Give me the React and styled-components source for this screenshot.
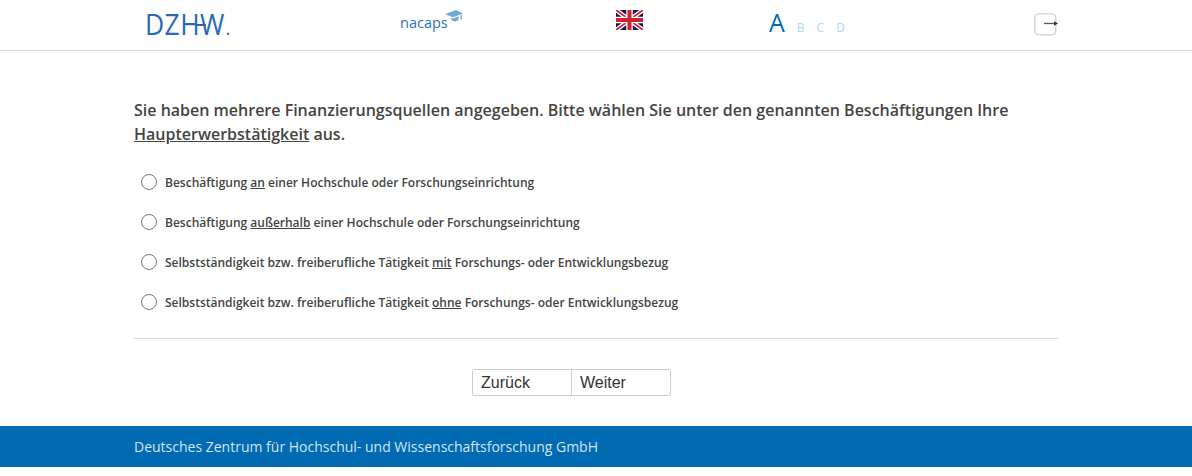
import React from 'react';
import styled, { createGlobalStyle } from 'styled-components';

const GlobalStyle = createGlobalStyle`
  html, body {
    margin: 0;
    padding: 0;
    background: #fff;
    font-family: "Open Sans", sans-serif;
    color: #444;
  }
`;

const options = [
  ['Beschäftigung ', 'an', ' einer Hochschule oder Forschungseinrichtung'],
  ['Beschäftigung ', 'außerhalb', ' einer Hochschule oder Forschungseinrichtung'],
  ['Selbstständigkeit bzw. freiberufliche Tätigkeit ', 'mit', ' Forschungs- oder Entwicklungsbezug'],
  ['Selbstständigkeit bzw. freiberufliche Tätigkeit ', 'ohne', ' Forschungs- oder Entwicklungsbezug'],
];

const FlagIcon = () => (
  <svg width="27" height="20" viewBox="0 0 27 20">
    <rect width="27" height="20" fill="#14145f" />
    <path d="M0 0L27 20M27 0L0 20" stroke="#fff" strokeWidth="4.5" />
    <path d="M0 0L27 20M27 0L0 20" stroke="#d3202c" strokeWidth="1.8" />
    <path d="M13.5 0V20M0 10H27" stroke="#fff" strokeWidth="6.5" />
    <path d="M13.5 0V20M0 10H27" stroke="#d3202c" strokeWidth="4" />
  </svg>
);

const CapIcon = () => (
  <svg width="18" height="12" viewBox="0 0 18 12">
    <path d="M0 4.2L11 0L18 3.4L8 7.2Z" fill="#6fa8d6" />
    <path d="M6 7.6L8.2 8.4L13.5 6.3V10.2L10 11.6L6.5 10.2Z" fill="#6fa8d6" />
    <rect x="15.6" y="4.5" width="1.3" height="5" fill="#6fa8d6" />
  </svg>
);

const LogoutIcon = () => (
  <svg width="24" height="26" viewBox="0 0 24 26">
    <rect x="0.8" y="3.8" width="21" height="21" rx="4" fill="#fff" stroke="#d9d9d9" strokeWidth="1.6" />
    <path d="M10 13.5H21" stroke="#555" strokeWidth="1.3" />
    <path d="M20 11.3L24 13.5L20 15.7Z" fill="#333" />
  </svg>
);

const App = () => (
  <>
    <GlobalStyle />
    <Header>
      <HeaderInner>
        <DzhwLogo>DZH<LogoW>W</LogoW><Dot>.</Dot></DzhwLogo>
        <NacapsLogo>nacaps<CapIcon /></NacapsLogo>
        <FlagSlot><FlagIcon /></FlagSlot>
        <Sizes>
          <SizeLetter $active>A</SizeLetter>
          <SizeLetter>B</SizeLetter>
          <SizeLetter>C</SizeLetter>
          <SizeLetter>D</SizeLetter>
        </Sizes>
        <LogoutSlot><LogoutIcon /></LogoutSlot>
      </HeaderInner>
    </Header>
    <Main>
      <Question>
        Sie haben mehrere Finanzierungsquellen angegeben. Bitte wählen Sie unter den genannten Beschäftigungen Ihre <u>Haupterwerbstätigkeit</u> aus.
      </Question>
      <OptionList>
        {options.map(([before, mark, after]) => (
          <Option key={before + mark}>
            <Radio />
            <span>{before}<u>{mark}</u>{after}</span>
          </Option>
        ))}
      </OptionList>
      <Divider />
      <ButtonGroup>
        <NavButton>Zurück</NavButton>
        <NavButton>Weiter</NavButton>
      </ButtonGroup>
    </Main>
    <Footer>
      <FooterText>Deutsches Zentrum für Hochschul- und Wissenschaftsforschung GmbH</FooterText>
    </Footer>
  </>
);

const Header = styled.header`
  height: 50px;
  border-bottom: 1px solid #ddd;
`;

const HeaderInner = styled.div`
  width: 913px;
  margin-left: 145px;
  height: 100%;
  display: grid;
  grid-template-columns: 255px 216px 153px 265px 24px;
  align-items: start;
`;

const DzhwLogo = styled.div`
  font-family: "Open Sans", sans-serif;
  font-size: 29px;
  font-weight: 400;
  line-height: 30px;
  margin-top: 9px;
  letter-spacing: 0.5px;
  color: #2a69b5;
  transform: scaleX(0.91);
  transform-origin: left center;
`;

const LogoW = styled.span`
  position: relative;
  letter-spacing: 0;

  &::before {
    content: '';
    position: absolute;
    left: -5px;
    top: 20px;
    width: 11px;
    height: 2px;
    background: #2a69b5;
  }
`;

const Dot = styled.span`
  margin-left: 2px;
  font-size: 14px;
  font-weight: 700;
`;

const NacapsLogo = styled.div`
  display: flex;
  align-items: flex-start;
  font-size: 14.5px;
  line-height: 20px;
  margin-top: 13px;
  color: #2a75b8;

  svg {
    margin-top: -3px;
    margin-left: -3px;
  }
`;

const FlagSlot = styled.div`
  margin-top: 10px;
  line-height: 0;
`;

const Sizes = styled.div`
  display: flex;
  align-items: baseline;
  gap: 12px;
  margin-top: 7px;
  line-height: 30px;
`;

const SizeLetter = styled.span`
  font-size: ${(p) => (p.$active ? '25px' : '12px')};
  color: ${(p) => (p.$active ? '#0069b4' : '#b5d5ee')};
`;

const LogoutSlot = styled.div`
  margin-top: 10px;
  line-height: 0;
`;

const Main = styled.main`
  width: 924px;
  margin: 0 auto;
  padding-top: 47px;
`;

const Question = styled.h1`
  margin: 0;
  font-size: 16px;
  line-height: 24px;
  font-weight: 600;
  color: #444;
`;

const OptionList = styled.div`
  display: flex;
  flex-direction: column;
  margin-top: 16px;
`;

const Option = styled.label`
  display: flex;
  align-items: center;
  height: 40px;
  padding-left: 7px;
  font-size: 12px;
  font-weight: 600;
  color: #444;
`;

const Radio = styled.span`
  box-sizing: border-box;
  width: 16px;
  height: 16px;
  margin-right: 8px;
  border: 1px solid #777;
  border-radius: 50%;
  background: #fff;
`;

const Divider = styled.hr`
  margin: 16px 0 0;
  border: 0;
  border-top: 1px solid #ddd;
`;

const ButtonGroup = styled.div`
  display: flex;
  width: 199px;
  margin: 30px 0 0 338px;
  border: 1px solid #ccc;
  border-radius: 2px;
  box-sizing: border-box;
`;

const NavButton = styled.button`
  flex: 1;
  height: 25px;
  padding: 0 8px;
  background: #fff;
  border: 0;
  font-family: "Liberation Sans", Arial, sans-serif;
  font-size: 16px;
  color: #333;
  text-align: left;

  & + & {
    border-left: 1px solid #ccc;
  }
`;

const Footer = styled.footer`
  margin-top: 30px;
  height: 41px;
  background: #006ab3;
  display: flex;
  align-items: center;
`;

const FooterText = styled.div`
  margin-left: 134px;
  font-size: 14px;
  color: #d5e4f1;
`;

export default App;
